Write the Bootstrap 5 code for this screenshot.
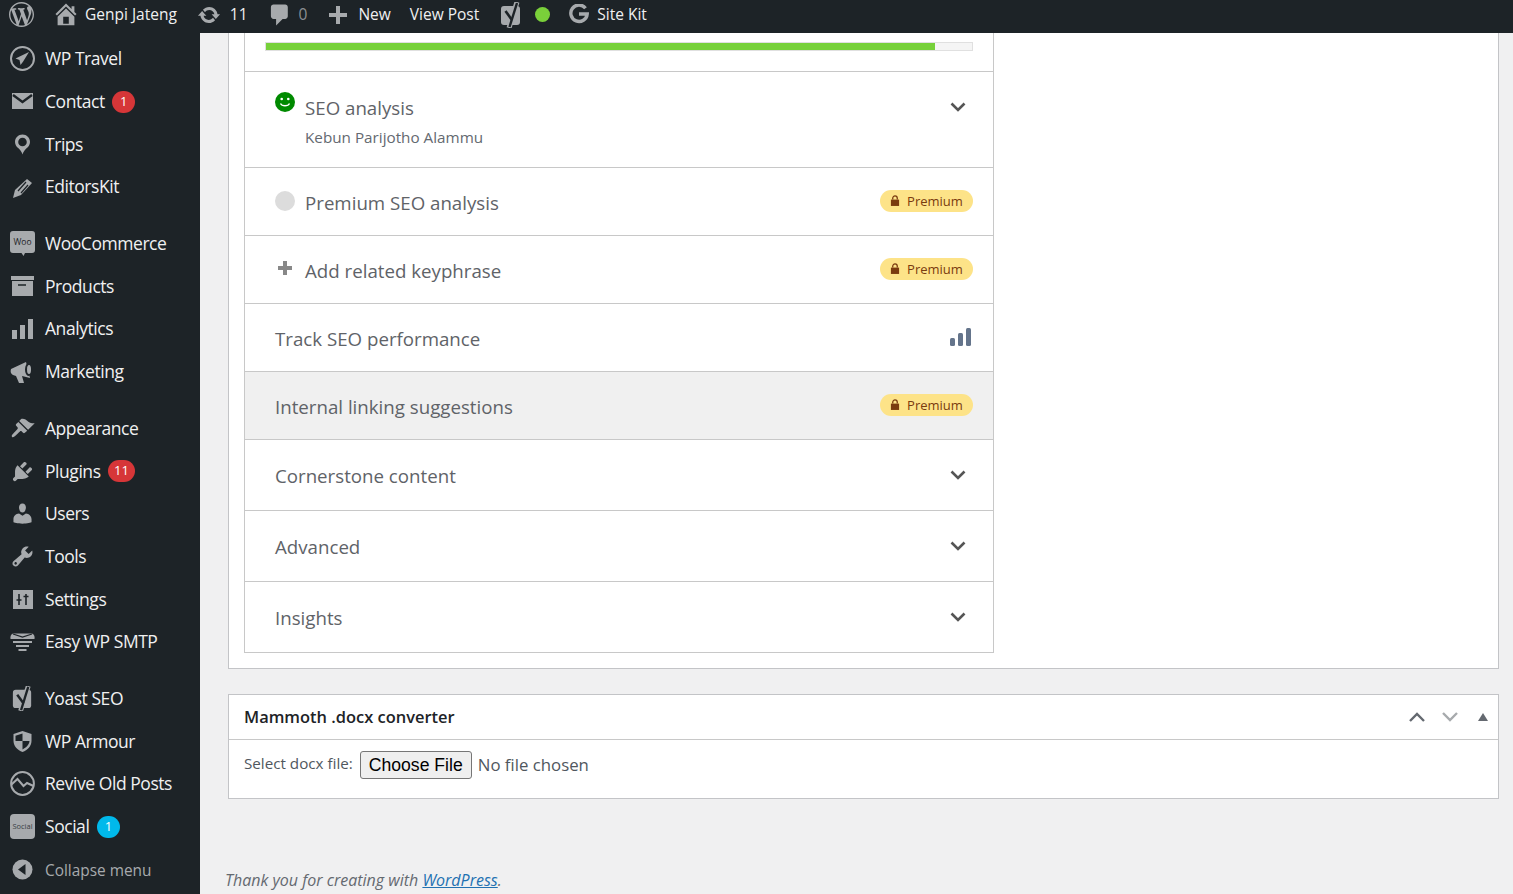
<!DOCTYPE html>
<html lang="en">
<head>
<meta charset="utf-8">
<title>Edit Post</title>
<link href="https://cdn.jsdelivr.net/npm/bootstrap@5.3.0/dist/css/bootstrap.min.css" rel="stylesheet">
<style>
html,body{height:894px;overflow:hidden}
body{background:#f0f0f1;font-family:"Open Sans","Noto Sans",sans-serif;color:#50575e}
svg{display:block;flex:none}
.wp-bar{height:33px;background:#1d2327;color:#f0f0f1;font-size:15.5px;padding-bottom:4px}
.wp-bar .tb-ic{fill:#a7aaad}
.tb-muted{color:#8c8f94}
.tb-logo{margin-left:9px;margin-top:-1px}
.tb-home{margin-left:18px;margin-top:-2px}
.tb-site{margin-left:5px}
.tb-upd{margin-left:20px}
.tb-s9{margin-left:9px}
.tb-cmt{margin-left:19px}
.tb-s6{margin-left:6px}
.tb-plus{margin-left:21px}
.tb-s10{margin-left:10px}
.tb-s8{margin-left:8px}
.tb-view{margin-left:19px}
.tb-yo{margin-left:21px}
.tb-dot{width:15px;height:15px;border-radius:50%;background:#7ad03a;margin-left:13px}
.tb-g{margin-left:19px;margin-top:-1px}
.page-wrap{height:861px}
.wp-side{width:200px;background:#1d2327;color:#f0f0f1;font-size:17.5px;padding-top:4.6px;letter-spacing:-.45px}
.sb-item{height:42.7px}
.sb-item>span{margin-top:-1px}
.sb-ico{width:25px;margin:0 10px;fill:#a7aaad}
.sb-gap{height:14px}
.sb-item>.sb-badge{min-width:23px;height:22px;border-radius:11px;background:#d63638;color:#fff;font-size:13px;letter-spacing:0;margin:0 0 0 7.500px;padding:0 6px}
.sb-item>.sb-badge-blue{background:#00b9eb}
.sb-collapse{color:#a7aaad;font-size:15.4px;letter-spacing:0}
.sb-item.sb-collapse>span{margin-top:2px}
.wp-main{padding:0 14px 0 25px;min-width:0}
.pbox{background:#fff;border:1px solid #c3c4c7;margin-left:3px}
.pbox-top{border-top:0;padding:0 0 15px 15px}
.yo-panel{width:750px;border:1px solid #c8c8c8;border-top:0;border-bottom:0}
.yo-row{border-bottom:1px solid #c8c8c8;padding:0 20px 0 30px;font-size:18.7px;color:#5f6368}
.yo-row>span{padding-top:2px}
.h-68>span{padding-top:4px}
.yo-progress-row{height:39px;padding-top:9px}
.yo-track{height:9px;background:#f5f5f5;border:1px solid #e0e0e0;margin-left:-10px}
.yo-fill{height:100%;background:#77d13a}
.h-seo{height:96px}
.h-68{height:68px}
.h-71{height:71px}
.yo-grey{background:#f0f0f0}
.yo-sub{font-size:15.25px;margin-top:8px;color:#646970}
.yo-ttl-seo{padding-top:27px}
.yo-ic-seo{margin-top:20px;margin-right:10px}
.yo-circ{width:20px;height:20px;border-radius:50%;background:#dcdcdc;margin-right:10px;margin-top:-2px}
.yo-pl{margin-right:10px;margin-top:-3px}
.yo-chev{margin-right:7px}
.yo-chev-seo{margin-top:27px}
.prem{width:93px;height:22px;border-radius:11px;background:#fde388;color:#7a3b0f;font-size:13px;gap:7px;margin-top:-2px}
.prem span{padding-top:3px}
.yo-bars{margin-right:2px;margin-top:-1px}
.pbox-doc{margin-top:25px;height:105px}
.doc-head{height:45px;border-bottom:1px solid #c8c8c8;padding:0 10px 0 15px;color:#1d2327;font-size:16.45px;font-weight:600}
.doc-body{padding:11px 15px;font-size:15.2px;color:#50575e}
.doc-label{margin-right:7px;margin-top:-3px}
.doc-file{font-size:16.8px;color:#50575e;width:300px;font-family:"Open Sans",sans-serif}
.doc-file::file-selector-button{font-family:"Liberation Sans",sans-serif;font-size:17.6px;color:#000;background:#efefef;border:1px solid #767676;border-radius:3px;height:28px;width:112px;padding:0;margin-right:6px}
.doc-ctl{gap:15px}
.doc-tri{margin-left:4px}
.wp-foot{margin-top:69px;font-size:16px;font-style:italic;color:#646970}
.wp-foot a{color:#2271b1}
</style>
</head>
<body>
<nav class="wp-bar d-flex align-items-center">
  <svg class="tb-ic tb-logo" width="25" height="25" viewBox="0 0 20 20"><path d="M20 10c0-5.51-4.49-10-10-10C4.48 0 0 4.49 0 10c0 5.52 4.48 10 10 10 5.51 0 10-4.48 10-10zM7.78 15.37L4.37 6.22c.55-.02 1.17-.08 1.17-.08.5-.06.44-1.13-.06-1.11 0 0-1.45.11-2.37.11-.18 0-.37 0-.58-.01C4.12 2.69 6.87 1.11 10 1.11c2.33 0 4.45.87 6.05 2.34-.68-.11-1.65.39-1.65 1.58 0 .74.45 1.36.9 2.1.35.61.55 1.36.55 2.46 0 1.49-1.4 5-1.4 5l-3.03-8.37c.54-.02.82-.17.82-.17.5-.05.44-1.25-.06-1.22 0 0-1.44.12-2.38.12-.87 0-2.33-.12-2.33-.12-.5-.03-.56 1.2-.06 1.22l.92.08 1.26 3.41zM17.41 10c.24-.64.74-1.87.43-4.25.7 1.29 1.05 2.71 1.05 4.25 0 3.29-1.73 6.24-4.4 7.78.97-2.59 1.94-5.2 2.92-7.78zM6.1 18.09C3.12 16.65 1.11 13.53 1.11 10c0-1.3.23-2.48.72-3.59C3.25 10.3 4.67 14.2 6.1 18.09zm4.03-6.63l2.58 6.98c-.86.29-1.76.45-2.71.45-.79 0-1.57-.11-2.29-.33.81-2.38 1.62-4.74 2.42-7.1z"/></svg>
  <svg class="tb-ic tb-home" width="28" height="28" viewBox="0 0 20 20"><path d="M16 8.5l1.53 1.53-1.06 1.06L10 4.62l-6.47 6.47-1.06-1.06L10 2.5l4 4v-2h2v4zm-6-2.46l6 5.99V18H4v-5.97zM12 17v-5H8v5h4z"/></svg>
  <span class="tb-site">Genpi Jateng</span>
  <svg class="tb-ic tb-upd" width="24" height="24" viewBox="0 0 20 20"><path d="M10.2 3.28c3.53 0 6.43 2.61 6.92 6h2.08l-3.5 4-3.5-4h2.32c-.45-1.97-2.21-3.45-4.32-3.45-1.45 0-2.73.71-3.54 1.78L4.95 5.66C6.23 4.2 8.11 3.28 10.2 3.28zm-.4 13.44c-3.52 0-6.43-2.61-6.92-6H.8l3.5-4c1.17 1.33 2.33 2.67 3.5 4H5.48c.45 1.97 2.21 3.45 4.32 3.45 1.45 0 2.73-.71 3.54-1.78l1.71 1.95c-1.28 1.46-3.15 2.38-5.25 2.38z"/></svg>
  <span class="tb-s9">11</span>
  <svg class="tb-ic tb-cmt" width="26" height="26" viewBox="0 0 20 20"><path d="M5 2h9c1.1 0 2 .9 2 2v7c0 1.1-.9 2-2 2h-2l-5 5v-5H5c-1.1 0-2-.9-2-2V4c0-1.1.9-2 2-2z"/></svg>
  <span class="tb-s6 tb-muted">0</span>
  <svg class="tb-ic tb-plus" width="20" height="20" viewBox="0 0 20 20"><path d="M8 1h4v7h7v4h-7v7H8v-7H1V8h7z"/></svg>
  <span class="tb-s10">New</span>
  <span class="tb-view">View Post</span>
  <svg class="tb-ic tb-yo" width="22" height="26" viewBox="0 0 22 26"><path d="M4 4h13c2 0 3 1 3 3v13c0 2-1 3-3 3H4c-2 0-3-1-3-3V7c0-2 1-3 3-3z"/><path d="M17 0L9 26" stroke="#a7aaad" stroke-width="5"/><path d="M17 1L9.500 25" stroke="#1d2327" stroke-width="2.400"/><path d="M5.500 9l6.500 9" fill="none" stroke="#1d2327" stroke-width="2.600"/></svg>
  <div class="tb-dot"></div>
  <svg class="tb-g" width="20" height="20" viewBox="0 0 20 20"><path d="M16.500 4.200A8.200 8.200 0 1 0 18.200 10H10" fill="none" stroke="#a7aaad" stroke-width="3.400"/></svg>
  <span class="tb-s8">Site Kit</span>
</nav>

<div class="page-wrap d-flex">
  <aside class="wp-side flex-shrink-0 d-flex flex-column">
    <div class="sb-item d-flex align-items-center">
      <svg class="sb-ico" width="25" height="25" viewBox="0 0 25 25"><circle cx="12.500" cy="12.500" r="11.500" fill="none" stroke="#a7aaad" stroke-width="2"/><path d="M19 6L5.500 12.500 9.500 14l1 5 2.500-3.200z"/></svg><span>WP Travel</span>
    </div>
    <div class="sb-item d-flex align-items-center">
      <svg class="sb-ico" width="25" height="25" viewBox="0 0 25 25"><path d="M2 4h21v16H2z"/><path d="M3 6l9.500 7L22 6" fill="none" stroke="#1d2327" stroke-width="2.400"/></svg><span>Contact</span><span class="sb-badge d-flex align-items-center justify-content-center">1</span>
    </div>
    <div class="sb-item d-flex align-items-center">
      <svg class="sb-ico" width="25" height="25" viewBox="0 0 20 20"><path d="M10 2C6.690 2 4 4.690 4 8c0 2.020 1.170 3.710 2.530 4.890.43.370 1.180.960 1.850 1.830.74.970 1.140 1.720 1.620 3.280.48-1.560.88-2.310 1.620-3.280.67-.87 1.420-1.460 1.850-1.830C14.830 11.710 16 10.020 16 8c0-3.310-2.690-6-6-6zm0 2.560c1.900 0 3.440 1.540 3.440 3.440S11.900 11.440 10 11.440 6.560 9.900 6.560 8 8.100 4.560 10 4.560z"/></svg><span>Trips</span>
    </div>
    <div class="sb-item d-flex align-items-center">
      <svg class="sb-ico" width="25" height="25" viewBox="0 0 25 25"><path d="M17 4l5 4-11 12-8 3 2-8z"/><path d="M8 16l8-9M11 18l7-8" stroke="#1d2327" stroke-width="1.200"/></svg><span>EditorsKit</span>
    </div>
    <div class="sb-gap"></div>
    <div class="sb-item d-flex align-items-center">
      <svg class="sb-ico" width="25" height="25" viewBox="0 0 25 25"><path d="M3 0h19a3 3 0 0 1 3 3v16a3 3 0 0 1-3 3h-7l-1.500 3-2-3H3a3 3 0 0 1-3-3V3a3 3 0 0 1 3-3z"/><text x="12.500" y="14" text-anchor="middle" font-size="8.500" fill="#1d2327" font-family="Open Sans" letter-spacing="0">Woo</text></svg><span>WooCommerce</span>
    </div>
    <div class="sb-item d-flex align-items-center">
      <svg class="sb-ico" width="25" height="25" viewBox="0 0 25 25"><path d="M1 2h23v4H1zM2 7h21v15H2z"/><path d="M8 11h8" stroke="#1d2327" stroke-width="1.500"/></svg><span>Products</span>
    </div>
    <div class="sb-item d-flex align-items-center">
      <svg class="sb-ico" width="25" height="25" viewBox="0 0 25 25"><path d="M2 13h5v9H2zM10 8h5v14h-5zM18 2h5v20h-5z"/></svg><span>Analytics</span>
    </div>
    <div class="sb-item d-flex align-items-center">
      <svg class="sb-ico" width="25" height="25" viewBox="0 0 25 25"><path d="M1 10l15-7 4 16-8-2 2 7H9l-3-7-3-1c-2-1-3-3-2-6z"/><ellipse cx="18.500" cy="10.500" rx="3.500" ry="6.500" fill="#1d2327"/><ellipse cx="19" cy="10.500" rx="2" ry="4.500"/></svg><span>Marketing</span>
    </div>
    <div class="sb-gap"></div>
    <div class="sb-item d-flex align-items-center">
      <svg class="sb-ico" width="25" height="25" viewBox="0 0 20 20"><path d="M14.480 11.060L7.410 3.990l1.500-1.500c.5-.56 2.300-.47 3.510.32 1.210.8 1.430 1.280 2.910 2.100 1.180.64 2.450 1.260 4.450.85zm-.71.71L6.700 4.700 4.930 6.470c-.39.39-.39 1.020 0 1.410l1.060 1.060c.39.39.39 1.030 0 1.420-.6.6-1.400 1.560-2.650 2.810-1.570 1.570-2.470 2.790-1.710 3.550.76.75 1.980-.15 3.550-1.720 1.250-1.250 2.210-2.050 2.810-2.650.39-.39 1.030-.39 1.420 0l1.060 1.060c.39.39 1.020.39 1.410 0z"/></svg><span>Appearance</span>
    </div>
    <div class="sb-item d-flex align-items-center">
      <svg class="sb-ico" width="25" height="25" viewBox="0 0 20 20"><path d="M13.110 4.360L9.870 7.600 8 5.730l3.240-3.240c.35-.34 1.050-.2 1.560.32.52.51.66 1.210.31 1.550zm-8 1.770l.91-1.120 9.010 9.010-1.190.84c-.71.71-2.630 1.160-3.820 1.160H6.140L4.900 17.260c-.59.59-1.540.59-2.120 0-.59-.58-.59-1.530 0-2.120l1.240-1.240v-3.880c0-1.130.4-3.190 1.090-3.890zm7.260 3.970l3.240-3.240c.34-.35 1.040-.21 1.550.31.52.51.66 1.210.31 1.550l-3.240 3.250z"/></svg><span>Plugins</span><span class="sb-badge d-flex align-items-center justify-content-center">11</span>
    </div>
    <div class="sb-item d-flex align-items-center">
      <svg class="sb-ico" width="25" height="25" viewBox="0 0 20 20"><path d="M10 9.250c-2.270 0-2.730-3.440-2.730-3.440C7 4.020 7.820 2 9.970 2c2.160 0 2.980 2.020 2.710 3.810 0 0-.41 3.440-2.680 3.440zm0 2.570L12.720 10c2.390 0 4.520 2.330 4.520 4.530v2.490s-3.650 1.130-7.240 1.130c-3.650 0-7.240-1.130-7.240-1.130v-2.490c0-2.250 1.940-4.480 4.470-4.480z"/></svg><span>Users</span>
    </div>
    <div class="sb-item d-flex align-items-center">
      <svg class="sb-ico" width="25" height="25" viewBox="0 0 20 20"><path d="M16.680 9.770c-1.340 1.340-3.300 1.670-4.950.99l-5.410 6.520c-.99.99-2.590.99-3.580 0s-.99-2.590 0-3.570l6.520-5.420c-.68-1.650-.35-3.610.99-4.950 1.280-1.280 3.120-1.620 4.720-1.060l-2.890 2.890 2.820 2.820 2.860-2.870c.53 1.580.18 3.390-1.080 4.650zM3.810 16.210c.4.39 1.040.39 1.430 0 .4-.4.4-1.040 0-1.430-.39-.4-1.030-.4-1.430 0-.39.39-.39 1.030 0 1.430z"/></svg><span>Tools</span>
    </div>
    <div class="sb-item d-flex align-items-center">
      <svg class="sb-ico" width="25" height="25" viewBox="0 0 25 25"><path d="M3 3h20v19H3z"/><path d="M9 7v11M16 7v11M6.500 13h5M13.500 9.500h5" stroke="#1d2327" stroke-width="1.600"/></svg><span>Settings</span>
    </div>
    <div class="sb-item d-flex align-items-center">
      <svg class="sb-ico" width="25" height="25" viewBox="0 0 25 25"><path d="M3 4.500h19c2 .5 3 3 2.500 5.500H.5C0 7.500 1 5 3 4.500z"/><path d="M3 5l9.500 3L22 5" fill="none" stroke="#1d2327" stroke-width="1.300"/><path d="M3 12h19v2H3zM6 16h13v2H6zM8.500 20h8v2h-8z"/></svg><span>Easy WP SMTP</span>
    </div>
    <div class="sb-gap"></div>
    <div class="sb-item d-flex align-items-center">
      <svg class="sb-ico" width="25" height="25" viewBox="0 0 22 26"><path d="M4 4h13c2 0 3 1 3 3v13c0 2-1 3-3 3H4c-2 0-3-1-3-3V7c0-2 1-3 3-3z"/><path d="M17 0L9 26" stroke="#a7aaad" stroke-width="5"/><path d="M17 1L9.500 25" stroke="#1d2327" stroke-width="2.400"/><path d="M5.500 9l6.500 9" fill="none" stroke="#1d2327" stroke-width="2.600"/></svg><span>Yoast SEO</span>
    </div>
    <div class="sb-item d-flex align-items-center">
      <svg class="sb-ico" width="25" height="25" viewBox="0 0 25 25"><path d="M12.500 2l9 3v7c0 5-4 9-9 11-5-2-9-6-9-11V5z"/><path d="M12.500 4.500l-7 2.300V12h7zM12.500 12v8.500c3-1.500 6.800-4.500 7-8.500z" fill="#1d2327"/></svg><span>WP Armour</span>
    </div>
    <div class="sb-item d-flex align-items-center">
      <svg class="sb-ico" width="25" height="25" viewBox="0 0 25 25"><circle cx="12.500" cy="12.500" r="11.400" fill="none" stroke="#a7aaad" stroke-width="2"/><path d="M1.500 13.500L7.500 8l6 7 3.500-3 6.500 3" fill="none" stroke="#a7aaad" stroke-width="2"/></svg><span>Revive Old Posts</span>
    </div>
    <div class="sb-item d-flex align-items-center">
      <svg class="sb-ico" width="25" height="25" viewBox="0 0 25 25"><rect width="25" height="25" rx="4"/><text x="12.500" y="15" text-anchor="middle" font-size="7.500" fill="#3a3f44" font-family="Open Sans" letter-spacing="0">Social</text></svg><span>Social</span><span class="sb-badge sb-badge-blue d-flex align-items-center justify-content-center">1</span>
    </div>
    <div class="sb-item d-flex align-items-center sb-collapse">
      <svg class="sb-ico" width="25" height="25" viewBox="0 0 25 25"><circle cx="12.500" cy="12.500" r="10"/><path d="M15.500 7v11L8 12.500z" fill="#1d2327"/></svg><span>Collapse menu</span>
    </div>
  </aside>

  <main class="wp-main flex-grow-1">
    <section class="pbox pbox-top">
      <div class="yo-panel">
        <div class="yo-row yo-progress-row">
          <div class="yo-track"><div class="yo-fill" style="width:94.7%"></div></div>
        </div>
        <div class="yo-row h-seo d-flex align-items-start justify-content-between">
          <div class="d-flex align-items-start">
            <svg class="yo-ic-seo" width="20" height="20" viewBox="0 0 20 20"><circle cx="10" cy="10" r="10" fill="#008a00"/><circle cx="6.700" cy="7" r="1.300" fill="#fff"/><circle cx="13.300" cy="7" r="1.300" fill="#fff"/><path d="M5.500 11.500c1.500 3 7.500 3 9 0" fill="none" stroke="#fff" stroke-width="1.300"/></svg>
            <div class="yo-ttl-seo"><div class="lh-1">SEO analysis</div><div class="yo-sub">Kebun Parijotho Alammu</div></div>
          </div>
          <svg class="yo-chev yo-chev-seo" width="16" height="16" viewBox="0 0 16 16"><path d="M1.500 4.500L8 11l6.500-6.500" fill="none" stroke="#555" stroke-width="2.600"/></svg>
        </div>
        <div class="yo-row h-68 d-flex align-items-center">
          <div class="yo-circ"></div><span>Premium SEO analysis</span>
          <div class="prem ms-auto d-flex align-items-center justify-content-center"><svg width="10" height="11" viewBox="0 0 11 12"><path d="M1 5h9v7H1z" fill="#7a3b0f"/><path d="M3 5V3.500a2.500 2.500 0 0 1 5 0V5" fill="none" stroke="#7a3b0f" stroke-width="1.400"/></svg><span>Premium</span></div>
        </div>
        <div class="yo-row h-68 d-flex align-items-center">
          <svg class="yo-pl" width="20" height="20" viewBox="0 0 20 20"><path d="M8 3h4v5h5v4h-5v5H8v-5H3V8h5z" fill="#888"/></svg><span>Add related keyphrase</span>
          <div class="prem ms-auto d-flex align-items-center justify-content-center"><svg width="10" height="11" viewBox="0 0 11 12"><path d="M1 5h9v7H1z" fill="#7a3b0f"/><path d="M3 5V3.500a2.500 2.500 0 0 1 5 0V5" fill="none" stroke="#7a3b0f" stroke-width="1.400"/></svg><span>Premium</span></div>
        </div>
        <div class="yo-row h-68 d-flex align-items-center">
          <span>Track SEO performance</span>
          <svg class="yo-bars ms-auto" width="21" height="18" viewBox="0 0 21 18"><rect x="0" y="10" width="5" height="8" rx="1.500" fill="#64748b"/><rect x="8" y="5" width="5" height="13" rx="1.500" fill="#64748b"/><rect x="16" y="0" width="5" height="18" rx="1.500" fill="#64748b"/></svg>
        </div>
        <div class="yo-row yo-grey h-68 d-flex align-items-center">
          <span>Internal linking suggestions</span>
          <div class="prem ms-auto d-flex align-items-center justify-content-center"><svg width="10" height="11" viewBox="0 0 11 12"><path d="M1 5h9v7H1z" fill="#7a3b0f"/><path d="M3 5V3.500a2.500 2.500 0 0 1 5 0V5" fill="none" stroke="#7a3b0f" stroke-width="1.400"/></svg><span>Premium</span></div>
        </div>
        <div class="yo-row h-71 d-flex align-items-center justify-content-between">
          <span>Cornerstone content</span>
          <svg class="yo-chev" width="16" height="16" viewBox="0 0 16 16"><path d="M1.500 4.500L8 11l6.500-6.500" fill="none" stroke="#555" stroke-width="2.600"/></svg>
        </div>
        <div class="yo-row h-71 d-flex align-items-center justify-content-between">
          <span>Advanced</span>
          <svg class="yo-chev" width="16" height="16" viewBox="0 0 16 16"><path d="M1.500 4.500L8 11l6.500-6.500" fill="none" stroke="#555" stroke-width="2.600"/></svg>
        </div>
        <div class="yo-row h-71 d-flex align-items-center justify-content-between">
          <span>Insights</span>
          <svg class="yo-chev" width="16" height="16" viewBox="0 0 16 16"><path d="M1.500 4.500L8 11l6.500-6.500" fill="none" stroke="#555" stroke-width="2.600"/></svg>
        </div>
      </div>
    </section>

    <section class="pbox pbox-doc">
      <div class="doc-head d-flex align-items-center justify-content-between">
        <span>Mammoth .docx converter</span>
        <div class="doc-ctl d-flex align-items-center">
          <svg width="18" height="12" viewBox="0 0 18 12"><path d="M2 10l7-7 7 7" fill="none" stroke="#646970" stroke-width="2.400"/></svg>
          <svg width="18" height="12" viewBox="0 0 18 12"><path d="M2 2l7 7 7-7" fill="none" stroke="#a7aaad" stroke-width="2.400"/></svg>
          <svg class="doc-tri" width="10" height="8" viewBox="0 0 10 8"><path d="M5 0l5 8H0z" fill="#646970"/></svg>
        </div>
      </div>
      <div class="doc-body d-flex align-items-center">
        <label class="doc-label" for="docxf">Select docx file:</label>
        <input id="docxf" class="doc-file" type="file">
      </div>
    </section>

    <p class="wp-foot mb-0">Thank you for creating with <a href="#">WordPress</a>.</p>
  </main>
</div>
<script src="https://cdn.jsdelivr.net/npm/bootstrap@5.3.0/dist/js/bootstrap.bundle.min.js"></script>
</body>
</html>
